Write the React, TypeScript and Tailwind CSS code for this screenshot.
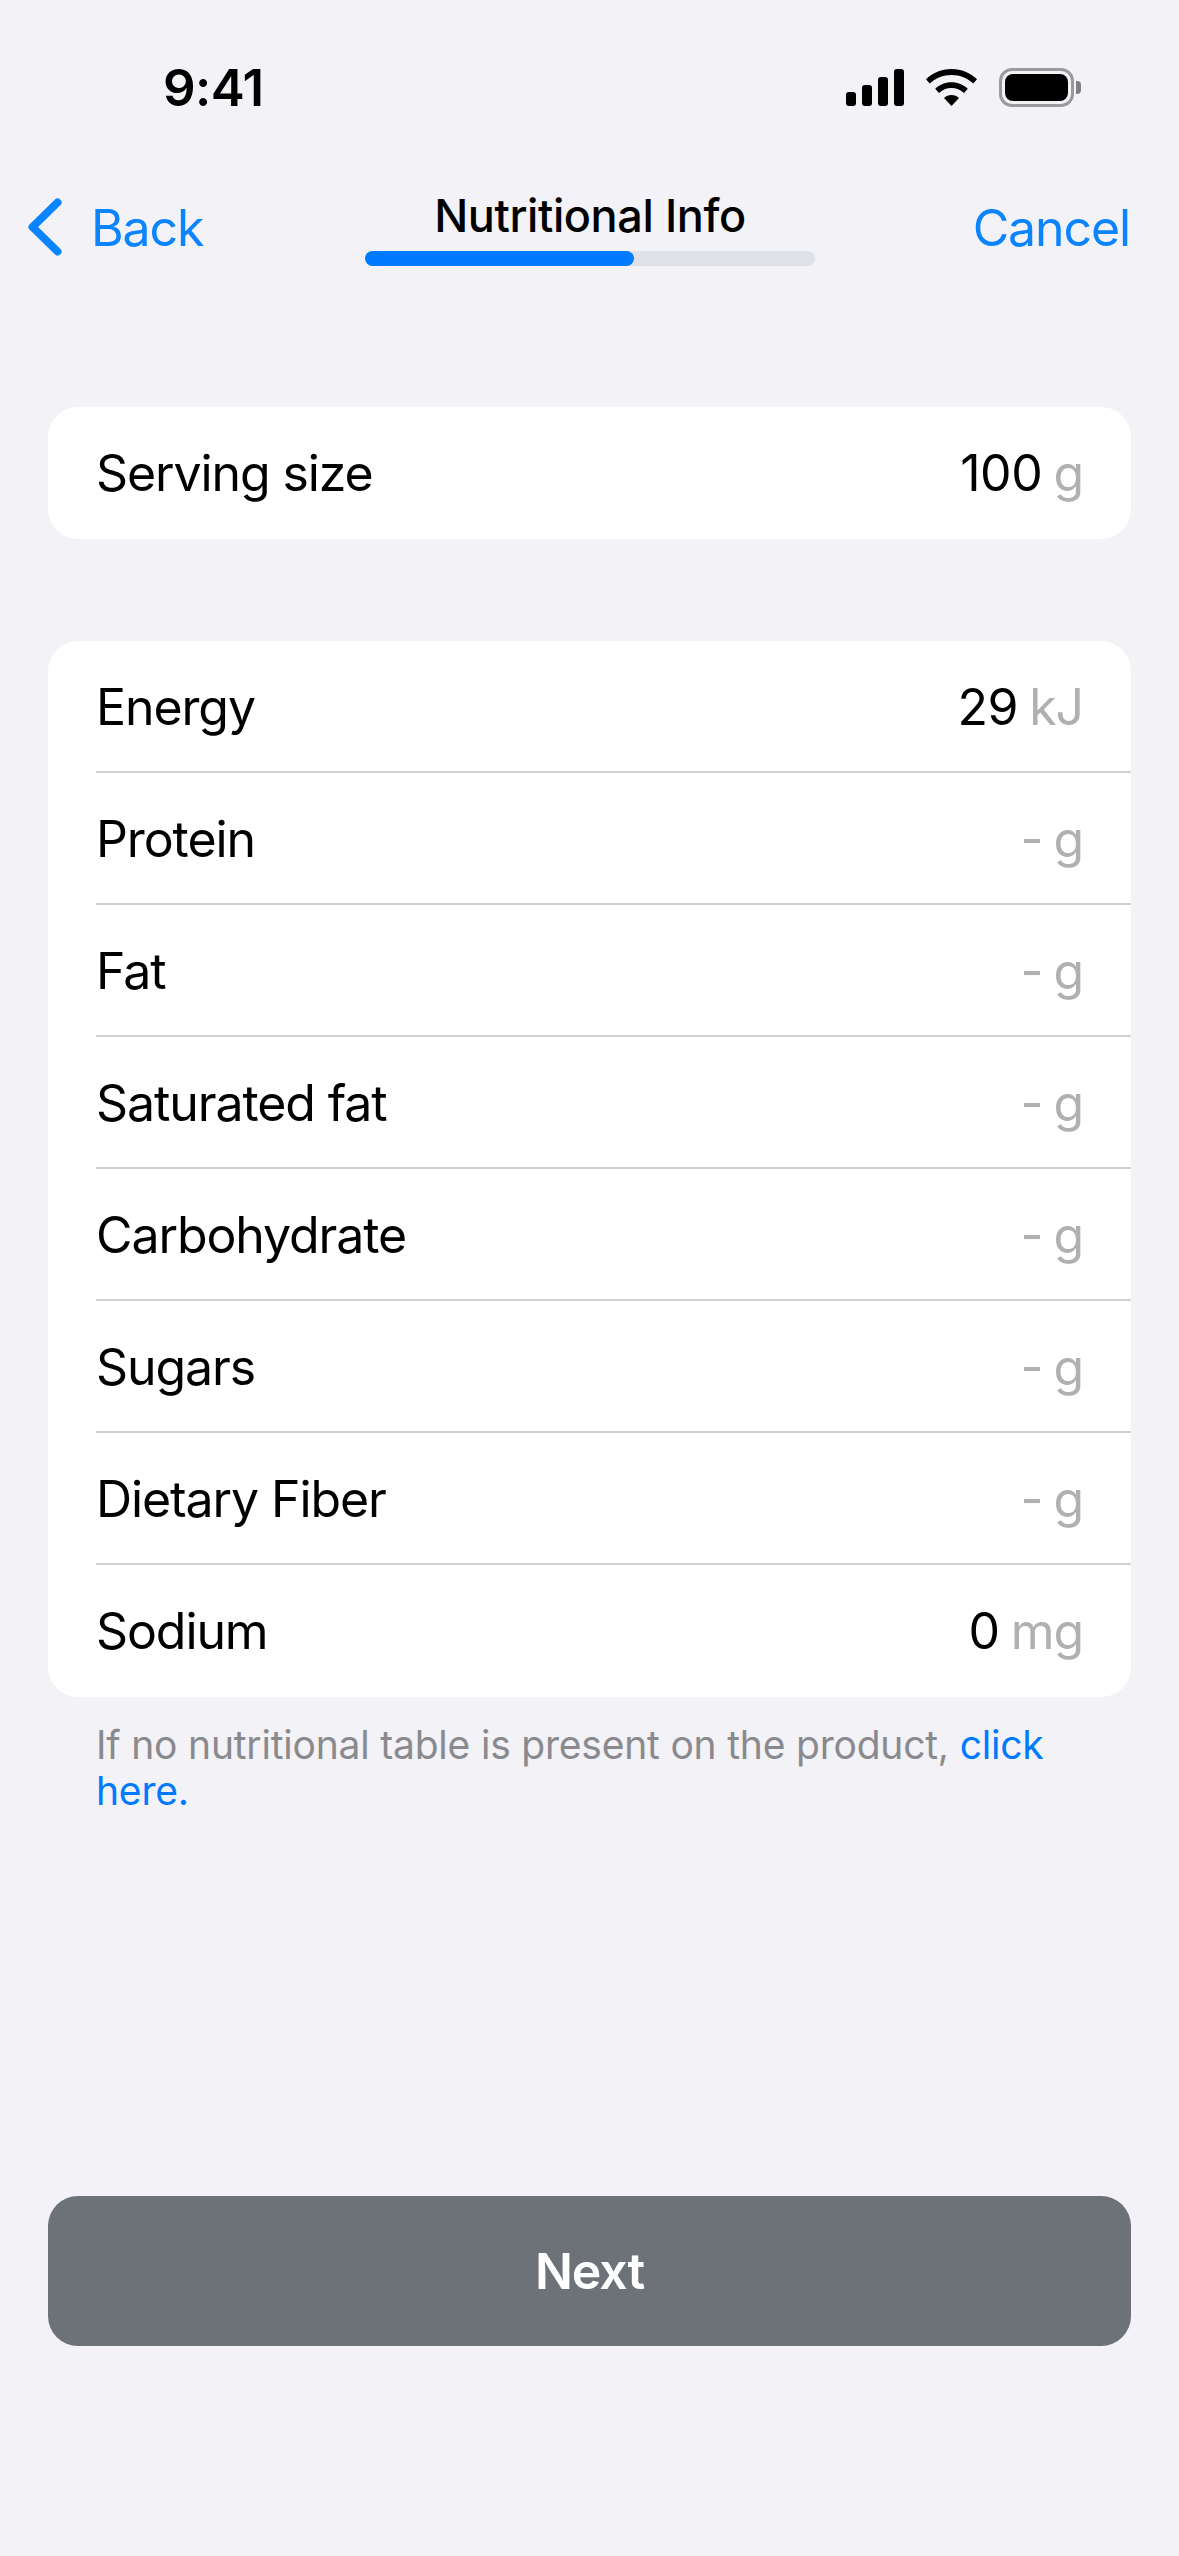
const rows = [
  { label: "Energy", value: "29", unit: "kJ" },
  { label: "Protein", value: "-", unit: "g" },
  { label: "Fat", value: "-", unit: "g" },
  { label: "Saturated fat", value: "-", unit: "g" },
  { label: "Carbohydrate", value: "-", unit: "g" },
  { label: "Sugars", value: "-", unit: "g" },
  { label: "Dietary Fiber", value: "-", unit: "g" },
  { label: "Sodium", value: "0", unit: "mg" },
];

function StatusIcons() {
  return (
    <div className="flex items-center">
      <svg width="58" height="37" viewBox="0 0 58 37" fill="#000">
        <rect x="0" y="23" width="10" height="14" rx="3" />
        <rect x="16" y="16" width="10" height="21" rx="3" />
        <rect x="32" y="8" width="10" height="29" rx="3" />
        <rect x="48" y="0" width="10" height="37" rx="3" />
      </svg>
      <svg className="ml-[22px]" width="51" height="37" viewBox="0 0 51 37" fill="#000">
        <path d="M25.5 0C35.5 0 44.4 3.9 51 10.2L47.3 14.6C41.6 9.2 34 5.9 25.5 5.9S9.4 9.2 3.7 14.6L0 10.2C6.6 3.9 15.5 0 25.5 0Z" />
        <path d="M25.5 13.2C31.8 13.2 37.5 15.7 41.8 19.7L38 24.1C34.7 21 30.3 19.1 25.5 19.1S16.3 21 13 24.1L9.2 19.7C13.5 15.7 19.2 13.2 25.5 13.2Z" />
        <path d="M25.5 26C28.4 26 31 27.1 33 28.9L25.5 37L18 28.9C20 27.1 22.6 26 25.5 26Z" />
      </svg>
      <div className="ml-[22px] flex items-center">
        <div className="w-[75px] h-[39px] rounded-[13px] border-[3px] border-[#9a9a9c] p-[3px]">
          <div className="w-full h-full rounded-[8px] bg-black" />
        </div>
        <div className="ml-[2px] w-[5px] h-[13px] rounded-r-[4px] bg-[#808083]" />
      </div>
    </div>
  );
}

function Value({ value, unit }: { value: string; unit: string }) {
  const empty = value === "-";
  return (
    <div className="flex items-baseline gap-[11px]">
      <span className={empty ? "text-[#b0b0b3]" : "text-black tracking-[-0.4px]"}>{value}</span>
      <span className="text-[#b0b0b3]">{unit}</span>
    </div>
  );
}

export default function App() {
  return (
    <div className="w-[1179px] h-[2556px] bg-[#f2f2f7] flex flex-col font-['Inter',sans-serif] text-[50px] tracking-[-1.1px] text-black overflow-hidden">
      {/* Status bar */}
      <div className="mt-[68px] h-[39px] pl-[163px] pr-[98px] flex items-center justify-between">
        <span className="text-[51px] leading-[39px] font-semibold tracking-[-0.6px]">9:41</span>
        <StatusIcons />
      </div>

      {/* Nav */}
      <div className="mt-[85px] h-[75px] pl-[28px] pr-[49px] grid grid-cols-[337px_450px_1fr]">
        <div className="flex items-start text-[#0a84ff]">
          <svg className="mt-[6px]" width="34" height="58" viewBox="0 0 34 58" fill="none" stroke="#0a84ff" strokeWidth="8" strokeLinecap="round" strokeLinejoin="round">
            <path d="M29.5 4.5 4.5 29 29.5 53.5" />
          </svg>
          <span className="ml-[29px] leading-[60px] mt-[6px]">Back</span>
        </div>
        <div className="flex flex-col items-center">
          <span className="text-[45px] leading-[50px] font-medium tracking-[-0.4px] -mt-[1px]">Nutritional Info</span>
          <div className="mt-[10px] w-full h-[15px] rounded-full bg-[#dee2e8]">
            <div className="w-[269px] h-full rounded-full bg-[#007aff]" />
          </div>
        </div>
        <div className="flex justify-end text-[#0a84ff]">
          <span className="leading-[60px] mt-[6px]">Cancel</span>
        </div>
      </div>

      {/* Serving size */}
      <div className="mt-[140px] mx-[48px] h-[132px] rounded-[30px] bg-white pl-[48px] pr-[48px] flex items-center justify-between">
        <span>Serving size</span>
        <Value value="100" unit="g" />
      </div>

      {/* Nutrients */}
      <div className="mt-[102px] mx-[48px] rounded-[30px] bg-white flex flex-col overflow-hidden">
        {rows.map((row, i) => (
          <div key={row.label} className={i < rows.length - 1 ? "ml-[48px] pr-[48px] pt-[3px] h-[132px] flex items-center justify-between border-b-2 border-[#d0d0d3]" : "ml-[48px] pr-[48px] h-[132px] flex items-center justify-between"}>
            <span>{row.label}</span>
            <Value value={row.value} unit={row.unit} />
          </div>
        ))}
      </div>

      <p className="mt-[25px] mx-[96px] text-[39px] leading-[46px] tracking-[-0.2px] text-[#8a8a8e]">
        If no nutritional table is present on the product, <span className="text-[#007aff]">click here.</span>
      </p>

      {/* Next */}
      <div className="mt-auto mb-[210px] mx-[48px] h-[150px] rounded-[30px] bg-[#6d7178] flex items-center justify-center text-white font-semibold">
        Next
      </div>
    </div>
  );
}
